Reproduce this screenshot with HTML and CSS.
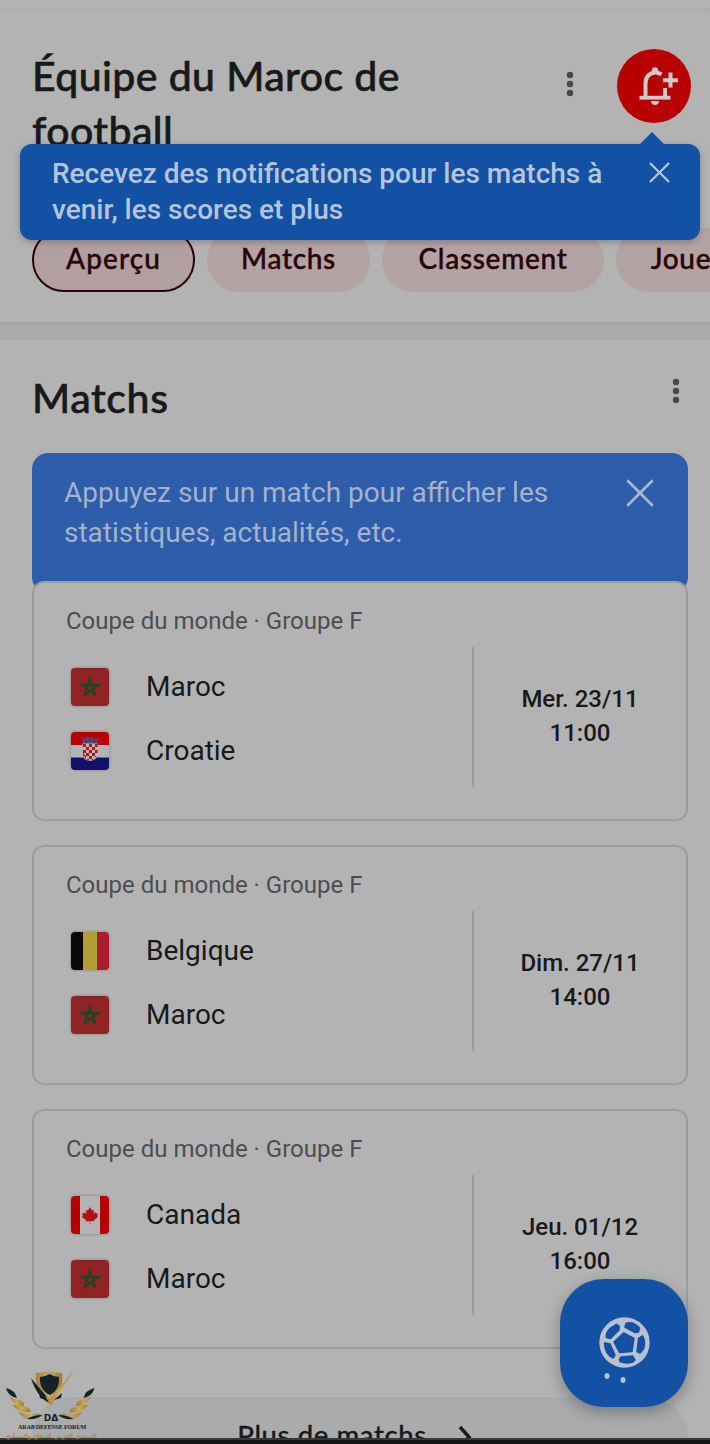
FILE: index.html
```html
<!DOCTYPE html>
<html lang="fr">
<head>
<meta charset="utf-8">
<title>Équipe du Maroc de football</title>
<link rel="stylesheet" href="styles.css">
</head>
<body>
<svg class="defs" width="0" height="0">
  <defs>
    <symbol id="dots" viewBox="0 0 8 26"><circle cx="4" cy="4" r="3.2"/><circle cx="4" cy="13" r="3.2"/><circle cx="4" cy="22" r="3.2"/></symbol>
    <symbol id="cross" viewBox="0 0 22 22"><path d="M1 1L21 21M21 1L1 21"/></symbol>
    <symbol id="maroc" viewBox="0 0 38 38"><rect width="38" height="38" fill="#912327"/><path d="M19 10.5L24.3 27L10.3 16.8H27.7L13.7 27Z" fill="none" stroke="#1b4524" stroke-width="1.8"/></symbol>
    <symbol id="croatie" viewBox="0 0 38 38"><rect width="38" height="13" fill="#b80000"/><rect y="13" width="38" height="12.5" fill="#b3b3b5"/><rect y="25.5" width="38" height="12.5" fill="#12126c"/>
      <path d="M11 6L14 7L16.500 5L19 6L21.500 5L24 7L27 6L26 12H12Z" fill="#32568a"/><path d="M14 8h2v3h-2zM18 7h2v3h-2zM22 8h2v3h-2z" fill="#87233d"/>
      <path d="M11.500 11.500H26.500V21Q26.500 28.500 19 29Q11.500 28.500 11.500 21Z" fill="#bdb3b5"/>
      <path d="M12 12h3v3h-3zM18 12h3v3h-3zM24 12h2.500v3H24zM15 15h3v3h-3zM21 15h3v3h-3zM12 18h3v3h-3zM18 18h3v3h-3zM24 18h2.500v3H24zM15 21h3v3h-3zM21 21h3v3h-3zM12 21.500h1l1 2.500h-2zM13 24h2v3zM18 24h3v3h-3zM24 24h1.500l-1.500 2zM15 27h3v1.800zM21 27h2.500l-2.500 1.500z" fill="#b3141b"/></symbol>
    <symbol id="belgique" viewBox="0 0 38 38"><rect width="12" height="38" fill="#090909"/><rect x="12" width="14" height="38" fill="#b29e34"/><rect x="26" width="12" height="38" fill="#a91d2c"/></symbol>
    <symbol id="canada" viewBox="0 0 38 38"><rect width="38" height="38" fill="#b4b4b4"/><rect width="9" height="38" fill="#b70000"/><rect x="29" width="9" height="38" fill="#b70000"/><path d="M19 11L21 14.500L23 13.700L22.300 18L24.500 16L25 17.500L27 17.300L26.200 20L27 21L22.800 24.300L23 25.500L19.300 25V28.500H18.700V25L15 25.500L15.200 24.300L11 21L11.800 20L11 17.300L13 17.500L13.500 16L15.700 18L15 13.700L17 14.500Z" fill="#b3100f"/></symbol>
  </defs>
</svg>

<div class="page">
  <div class="top-strip"></div>
  <header class="header">
    <h1 class="title">Équipe du Maroc de<br>football</h1>
    <svg class="menu"><use href="#dots"/></svg>
    <button class="bell" aria-label="Notifications">
      <svg viewBox="0 0 74 74" width="74" height="74" fill="none" stroke="#d2c9c9" stroke-width="4">
        <path d="M22.500 48.700H53.500" stroke-width="3.800"/>
        <path d="M28.500 48V35Q28.500 24.500 38 23.500Q41 23.300 44.500 25.500"/>
        <path d="M48 39V48"/>
        <path d="M53.500 23.500V38.500M46 31.200H61"/>
        <circle cx="38" cy="21.500" r="3.200" fill="#d2c9c9" stroke="none"/>
        <path d="M33.800 52H42.200A4.150 4 0 0 1 33.800 52Z" fill="#d2c9c9" stroke="none"/>
      </svg>
    </button>
  </header>
  <nav class="tabs">
    <span class="tab tab-first active">Aperçu</span>
    <span class="tab tab-second">Matchs</span>
    <span class="tab tab-third">Classement</span>
    <span class="tab tab-fourth">Joueurs</span>
  </nav>
  <div class="band"></div>

  <main class="main">
    <div class="section-head">
      <h2 class="section-title">Matchs</h2>
      <svg class="menu"><use href="#dots"/></svg>
    </div>
    <div class="hint">
      <p class="hint-text">Appuyez sur un match pour afficher les<br>statistiques, actualités, etc.</p>
      <svg class="hint-close"><use href="#cross"/></svg>
    </div>
    <div class="cards">
      <article class="card">
        <p class="league">Coupe du monde · Groupe F</p>
        <div class="match">
          <div class="teams">
            <div class="team"><svg class="flag"><use href="#maroc"/></svg><span>Maroc</span></div>
            <div class="team"><svg class="flag"><use href="#croatie"/></svg><span>Croatie</span></div>
          </div>
          <div class="date">Mer. 23/11<br>11:00</div>
        </div>
      </article>
      <article class="card">
        <p class="league">Coupe du monde · Groupe F</p>
        <div class="match">
          <div class="teams">
            <div class="team"><svg class="flag"><use href="#belgique"/></svg><span>Belgique</span></div>
            <div class="team"><svg class="flag"><use href="#maroc"/></svg><span>Maroc</span></div>
          </div>
          <div class="date">Dim. 27/11<br>14:00</div>
        </div>
      </article>
      <article class="card">
        <p class="league">Coupe du monde · Groupe F</p>
        <div class="match">
          <div class="teams">
            <div class="team"><svg class="flag"><use href="#canada"/></svg><span>Canada</span></div>
            <div class="team"><svg class="flag"><use href="#maroc"/></svg><span>Maroc</span></div>
          </div>
          <div class="date">Jeu. 01/12<br>16:00</div>
        </div>
      </article>
    </div>
    <div class="more">
      <span>Plus de matchs</span>
      <svg width="14" height="24" viewBox="0 0 14 24" fill="none" stroke="#1a1b1d" stroke-width="3.500"><path d="M2 2L11 12L2 22"/></svg>
    </div>
  </main>

  <div class="tooltip">
    <p class="tooltip-text">Recevez des notifications pour les matchs à<br>venir, les scores et plus</p>
    <svg class="tooltip-close"><use href="#cross"/></svg>
  </div>

  <button class="fab" aria-label="Football">
    <svg viewBox="0 0 128 128" width="128" height="128" fill="none">
      <circle cx="64.500" cy="63.500" r="25.200" fill="#b9c1d0"/>
      <g fill="#1251a4" stroke="#1251a4" stroke-width="1.500" stroke-linejoin="round">
        <path d="M63.500 54L74 59.500L72 72.500L59.500 73.500L54 63Z"/>
        <path d="M66 44.500Q73 41.500 79.500 49L78.500 53L75 53.500L65 48Z"/>
        <path d="M56.500 45.500L59 47V51L50.500 59.500L46.500 58.500Q45 55 50 49.500Z"/>
        <path d="M45 64L50 65L55 76L53.500 79Q45 76 44.500 64Z"/>
        <path d="M61 78L72.500 77L75 81L73 83Q66 85 60 82.500L59.500 80.500Z"/>
        <path d="M78.500 59.500L82.500 57Q86 63 83.500 70L80 74L77 72.500Z"/>
      </g>
      <ellipse cx="47" cy="97" rx="2.500" ry="3" fill="#b9c1d0"/>
      <ellipse cx="63" cy="101" rx="2.500" ry="3" fill="#b9c1d0"/>
    </svg>
  </button>

  <div class="bottom-bar"></div>

  <div class="forum">
    <svg viewBox="0 0 100 56" width="100" height="56">
      <defs><linearGradient id="gold" x1="0" x2="1"><stop offset="0" stop-color="#a8812f"/><stop offset=".5" stop-color="#c8a85c"/><stop offset="1" stop-color="#a17a2b"/></linearGradient></defs>
      <path d="M36 5Q43 5 49 3Q55 5 62 5Q64 26 50 35Q34 26 36 5Z" fill="url(#gold)"/>
      <path d="M40 9Q45 9 49.500 6Q54 9 59 9Q60 22 50 27Q39 22 40 9Z" fill="#13232c"/>
      <path d="M31 10L47 29L49 35Q37 29 31 10Z" fill="#13232c"/>
      <path d="M74 2L51 38L45 28L50 31Z" fill="url(#gold)"/>
      <path d="M39 25L46 32L40 30ZM62 25L54 32L61 30Z" fill="#13232c"/>
      <g id="wing">
        <path d="M6 20Q15 22 17 30Q8 28 6 20Z" fill="#13232c"/>
        <path d="M9 28Q14 32 20 32Q25 35 24 38Q14 39 9 28Z" fill="url(#gold)"/>
        <path d="M12 37Q22 37 30 41L31 44Q20 46 12 37Z" fill="url(#gold)"/>
        <path d="M18 44Q27 47 34 46Q39 44 43 48Q35 52 26 51Q21 48 18 44Z" fill="url(#gold)"/>
        <path d="M27 51Q33 47 42 47Q37 52 27 51Z" fill="#13232c"/>
      </g>
      <use href="#wing" transform="translate(100.500 0) scale(-1 1)"/>
    </svg>
    <span class="forum-da">DΔ</span>
    <span class="forum-name">ARAB DEFENSE FORUM</span>
    <span class="forum-arabic" lang="ar" dir="rtl">المنتدى العربي للدفاع والتسليح</span>
  </div>
</div>
</body>
</html>
```
FILE: styles.css
```css
* { box-sizing: border-box; }
body { margin: 0; background: #b3b3b3; font-family: Roboto, "Liberation Sans", sans-serif; color: #18191b; }
h1, h2, p { margin: 0; font-weight: 400; }
button { border: 0; padding: 0; }
svg { display: block; flex: none; }
.defs { position: absolute; }
.page { position: relative; width: 710px; height: 1444px; overflow: hidden; background: #b3b3b3; white-space: nowrap; }

.top-strip { height: 12px; background: linear-gradient(#b3b3b3 8px, #a9a9a9 9px, #b3b3b3 12px); }
.header { display: flex; height: 216px; padding: 36px 19px 0 32px; }
.title { flex: 1; font: 500 41px/55px Lato, sans-serif; letter-spacing: .4px; -webkit-text-stroke: .6px #18191b; }
.menu { width: 8px; height: 26px; fill: #47494c; }
.header .menu { margin: 23px 43px 0 0; }
.bell { width: 74px; height: 74px; margin-top: 1px; border-radius: 50%; background: #b80000; }

.tabs { display: flex; gap: 12px; height: 64px; padding-left: 32px; }
.tab { flex: none; height: 64px; border-radius: 32px; background: #b3a3a3; color: #2a0006; font: 500 28px/60px Lato, sans-serif; text-align: center; letter-spacing: .7px; -webkit-text-stroke: .4px #2a0006; }
.tab-first { width: 163px; }
.tab-second { width: 163px; }
.tab-third { width: 222px; }
.tab-fourth { width: 170px; }
.tab.active { border: 2px solid #2a0006; line-height: 56px; background: #b2a0a1; letter-spacing: 1.1px; }
.band { height: 18px; margin-top: 30px; background: #a9abad; border-top: 4px solid #a5a7aa; border-bottom: 2px solid #a5a6a8; }

.main { padding: 0 22px 0 32px; }
.section-head { display: flex; justify-content: space-between; height: 113px; padding: 33px 8px 0 0; }
.section-title { font: 500 41px/49px Lato, sans-serif; letter-spacing: .6px; -webkit-text-stroke: .6px #18191b; }
.section-head .menu { margin-top: 5px; }
.hint { display: flex; justify-content: space-between; height: 140px; padding: 20px 34px 0 32px; border-radius: 16px; background: #2e5dab; color: #a6b2c9; }
.hint-text { font-size: 28px; line-height: 40px; }
.hint-close { width: 28px; height: 28px; margin-top: 6px; fill: none; stroke: #abb8d2; stroke-width: 2; }
.cards { display: grid; gap: 24px; margin-top: -12px; }
.card { height: 240px; padding: 20px 0 0 32px; border: 2px solid #9b9da0; border-radius: 12px; background: #b3b3b3; }
.league { font-size: 24px; line-height: 36px; color: #4c4e51; }
.match { display: flex; margin-top: 8px; }
.teams { width: 408px; height: 140px; padding: 8px 0 0 5px; border-right: 2px solid #9a9c9f; }
.team { display: flex; align-items: center; gap: 37px; height: 64px; font-size: 28px; line-height: 64px; }
.flag { width: 38px; height: 38px; border-radius: 4px; box-shadow: 0 0 2px 1px #9a9596; }
.date { width: 212px; padding-top: 35px; font-size: 24px; font-weight: 500; line-height: 34px; text-align: center; }
.more { display: flex; justify-content: center; gap: 31px; height: 80px; margin-top: 48px; padding: 20px 11px 0 0; border-radius: 40px; background: #a9abad; font: 500 27.5px/36px Lato, sans-serif; letter-spacing: .6px; -webkit-text-stroke: .3px #18191b; }
.more svg { margin-top: 8px; }

.tooltip { position: absolute; left: 20px; top: 144px; width: 680px; height: 96px; padding: 12px 30px 0 32px; display: flex; justify-content: space-between; border-radius: 12px; background: #1251a4; color: #b5c4dc; box-shadow: 0 2px 7px rgba(0,0,0,.25); }
.tooltip::before { content: ""; position: absolute; right: 36px; top: -12px; border: 12px solid transparent; border-top: 0; border-bottom-color: #1251a4; }
.tooltip-text { font-size: 28px; font-weight: 500; line-height: 36px; }
.tooltip-close { width: 21px; height: 21px; margin-top: 6px; fill: none; stroke: #b2c3e0; stroke-width: 2.4; }

.fab { position: absolute; left: 560px; top: 1279px; width: 128px; height: 128px; border-radius: 44px; background: #1251a4; box-shadow: 0 5px 15px rgba(0,0,0,.3); }
.bottom-bar { position: absolute; left: 0; top: 1438px; width: 710px; height: 6px; background: #161616; border-top: 2px solid #383939; }

.forum { position: absolute; left: 0; top: 1368px; width: 104px; height: 76px; color: #13232c; text-align: center; }
.forum-da { position: absolute; left: 40px; top: 45px; width: 22px; font: 700 9px/10px "DejaVu Sans", sans-serif; }
.forum-name { position: absolute; left: 18px; top: 53px; font: 700 6.2px/12px "Liberation Serif", serif; letter-spacing: -.25px; }
.forum-arabic { position: absolute; left: 6px; top: 61px; font: 700 5.9px/14px "DejaVu Sans", sans-serif; color: #ad893c; }
```
